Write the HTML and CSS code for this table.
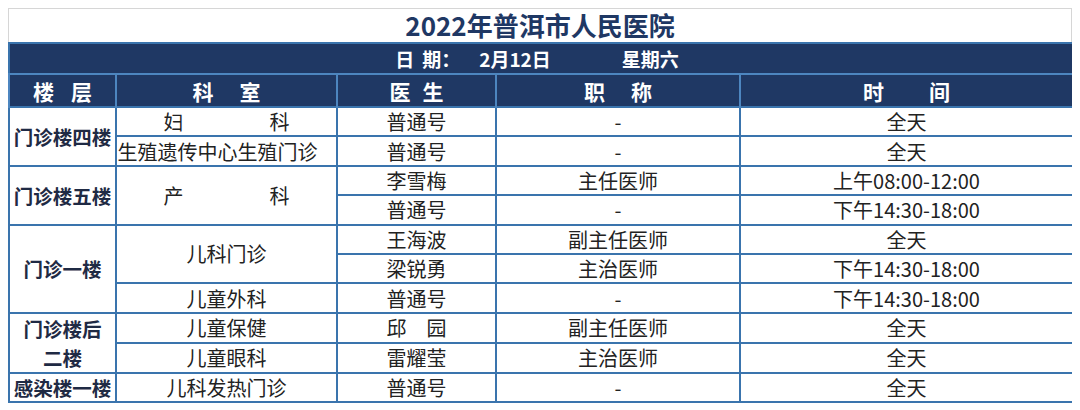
FILE: index.html
```html
<!DOCTYPE html>
<html lang="zh-CN">
<head>
<meta charset="utf-8">
<title>2022年普洱市人民医院</title>
<link rel="stylesheet" href="styles.css">
</head>
<body>
<div class="sheet">
  <div class="title">2022年普洱市人民医院</div>
  <table class="sched">
    <colgroup>
      <col class="c-floor">
      <col class="c-dept">
      <col class="c-doc">
      <col class="c-rank">
      <col class="c-time">
    </colgroup>
    <thead>
      <tr class="date-row">
        <th colspan="5"><span>日<i class="gap8"></i>期：</span><span class="date">2月12日</span><span class="week">星期六</span></th>
      </tr>
      <tr class="head-row">
        <th>楼<i class="gap17"></i>层</th>
        <th>科<i class="gap26"></i>室</th>
        <th>医<i class="gap12"></i>生</th>
        <th>职<i class="gap26"></i>称</th>
        <th>时<i class="gap45"></i>间</th>
      </tr>
    </thead>
    <tbody>
      <tr>
        <td class="floor" rowspan="2">门诊楼四楼</td>
        <td>妇<i class="gap86"></i>科</td>
        <td>普通号</td>
        <td>-</td>
        <td>全天</td>
      </tr>
      <tr>
        <td class="tight">生殖遗传中心生殖门诊</td>
        <td>普通号</td>
        <td>-</td>
        <td>全天</td>
      </tr>
      <tr>
        <td class="floor" rowspan="2">门诊楼五楼</td>
        <td rowspan="2">产<i class="gap86"></i>科</td>
        <td>李雪梅</td>
        <td>主任医师</td>
        <td>上午08:00-12:00</td>
      </tr>
      <tr>
        <td>普通号</td>
        <td>-</td>
        <td>下午14:30-18:00</td>
      </tr>
      <tr>
        <td class="floor" rowspan="3">门诊一楼</td>
        <td rowspan="2">儿科门诊</td>
        <td>王海波</td>
        <td>副主任医师</td>
        <td>全天</td>
      </tr>
      <tr>
        <td>梁锐勇</td>
        <td>主治医师</td>
        <td>下午14:30-18:00</td>
      </tr>
      <tr>
        <td>儿童外科</td>
        <td>普通号</td>
        <td>-</td>
        <td>下午14:30-18:00</td>
      </tr>
      <tr>
        <td class="floor floor-two" rowspan="2">门诊楼后<br>二楼</td>
        <td>儿童保健</td>
        <td>邱<i class="gap20"></i>园</td>
        <td>副主任医师</td>
        <td>全天</td>
      </tr>
      <tr>
        <td>儿童眼科</td>
        <td>雷耀莹</td>
        <td>主治医师</td>
        <td>全天</td>
      </tr>
      <tr>
        <td class="floor">感染楼一楼</td>
        <td>儿科发热门诊</td>
        <td>普通号</td>
        <td>-</td>
        <td>全天</td>
      </tr>
    </tbody>
  </table>
</div>
</body>
</html>
```
FILE: styles.css
```css
* { box-sizing: border-box; }

body {
  margin: 8px;
  background: #ffffff;
  font-family: "Noto Sans CJK SC", "Noto Sans", sans-serif;
  color: #222222;
}

.sheet {
  width: 1064px;
}

.title {
  height: 34px;
  border: 1px solid #d6d6d6;
  border-bottom: none;
  text-align: center;
  font-size: 26px;
  font-weight: 700;
  line-height: 32px;
  color: #1f3864;
}

.sched {
  width: 1064px;
  border-collapse: collapse;
  table-layout: fixed;
  border: 2px solid #3a74ad;
}

.c-floor { width: 107px; }
.c-dept { width: 221px; }
.c-doc { width: 159px; }
.c-rank { width: 244px; }
.c-time { width: 333px; }

.sched th {
  background: #1f3864;
  color: #ffffff;
  font-weight: 700;
  padding: 0;
  text-align: center;
  white-space: nowrap;
}

.date-row th {
  height: 31px;
  font-size: 19px;
  line-height: 28px;
  border-bottom: 2px solid #4d86c0;
  padding-right: 8px;
}

.date-row .date { margin-left: 19px; }
.date-row .week { margin-left: 71px; }

.head-row th {
  height: 33px;
  font-size: 21px;
  line-height: 30px;
  border-left: 2px solid #4d86c0;
  border-right: 2px solid #4d86c0;
}

.sched td {
  height: 29.4px;
  padding: 0;
  border: 2px solid #3a74ad;
  text-align: center;
  vertical-align: middle;
  font-size: 20px;
  line-height: 25px;
  color: #222222;
  white-space: nowrap;
}

.sched td.tight {
  padding-right: 18px;
}

.sched td.floor {
  font-size: 19.5px;
  font-weight: 700;
  color: #1f2a44;
}

.sched td.floor-two {
  line-height: 29px;
}

i {
  display: inline-block;
  font-style: normal;
}

.gap8 { width: 8px; }
.gap12 { width: 12px; }
.gap17 { width: 17px; }
.gap20 { width: 20px; }
.gap26 { width: 26px; }
.gap45 { width: 45px; }
.gap86 { width: 86px; }
```
